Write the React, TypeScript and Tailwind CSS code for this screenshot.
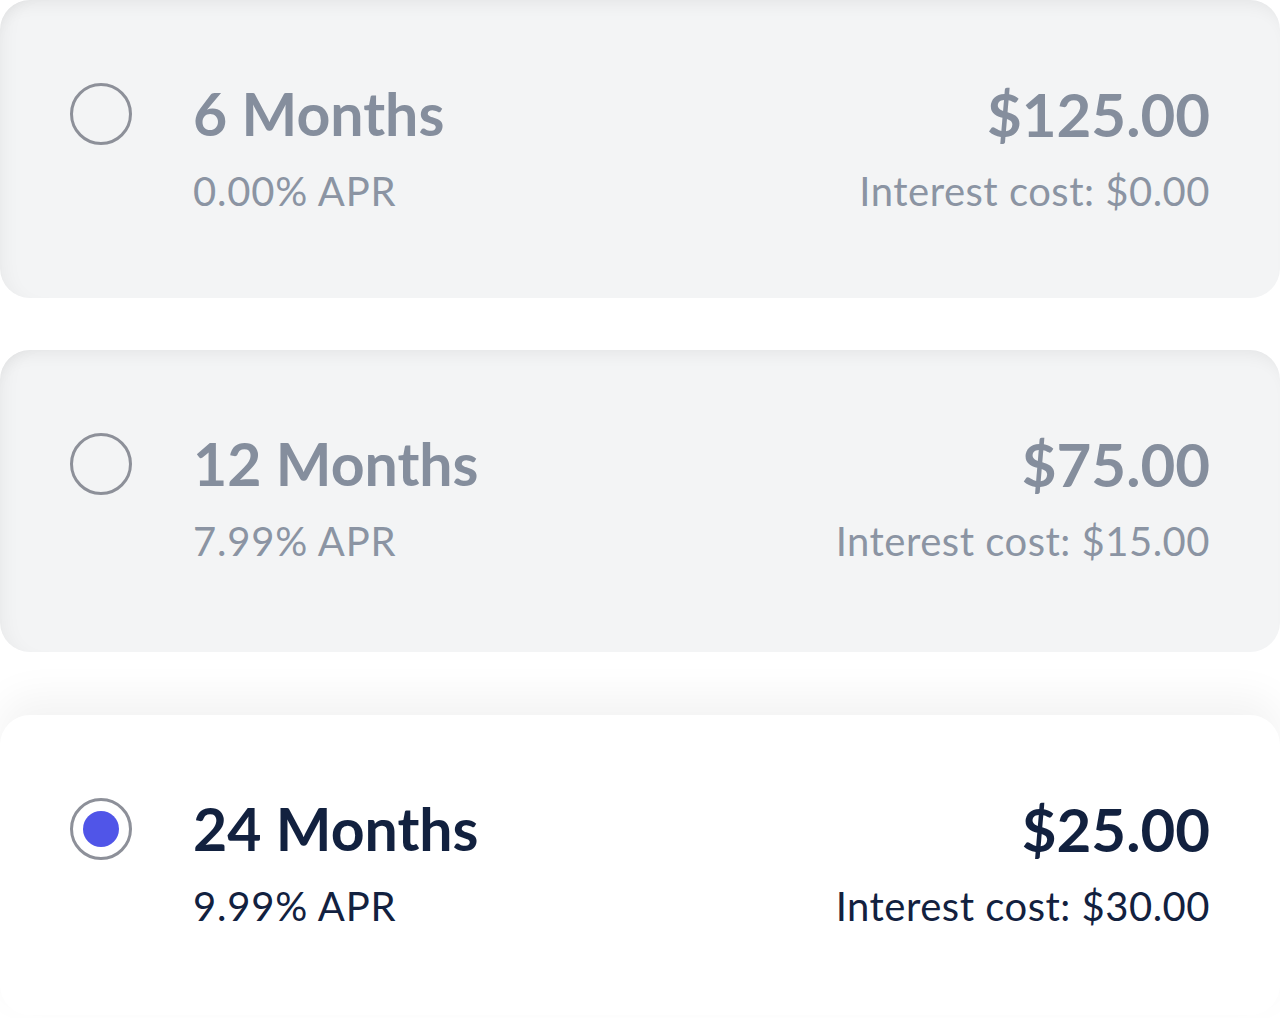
type Plan = {
  months: number;
  apr: string;
  payment: string;
  interest: string;
};

const plans: Plan[] = [
  { months: 6, apr: "0.00%", payment: "$125.00", interest: "$0.00" },
  { months: 12, apr: "7.99%", payment: "$75.00", interest: "$15.00" },
  { months: 24, apr: "9.99%", payment: "$25.00", interest: "$30.00" },
];

const Radio = ({ checked }: { checked: boolean }) => (
  <span className="flex h-[62px] w-[62px] shrink-0 items-center justify-center rounded-full border-[3px] border-[#8d9099] bg-transparent">
    {checked && <span className="h-[36px] w-[36px] rounded-full bg-[#5055e8]" />}
  </span>
);

const PlanCard = ({
  plan,
  selected,
  className,
}: {
  plan: Plan;
  selected: boolean;
  className: string;
}) => {
  const strong = selected ? "text-[#12213f]" : "text-[#858e9d]";
  const soft = selected ? "text-[#12213f]" : "text-[#8b94a3]";
  return (
    <div
      className={`flex w-full items-start justify-between rounded-[30px] px-[70px] pt-[78px] ${
        selected
          ? "bg-white shadow-[0_-18px_40px_rgba(0,0,0,0.05)]"
          : "bg-[#f3f4f5] shadow-[inset_0_14px_18px_-12px_rgba(0,0,0,0.07),inset_16px_0_20px_-14px_rgba(0,0,0,0.05)]"
      } ${className}`}
    >
      <div className="flex items-start gap-[61px]">
        <div className="flex h-[72px] items-center">
          <Radio checked={selected} />
        </div>
        <div className="flex flex-col">
          <span className={`text-[59px] font-bold leading-[72px] ${strong}`}>
            {plan.months} Months
          </span>
          <span className={`mt-[17px] text-[40px] leading-[48px] tracking-[0.8px] ${soft}`}>
            {plan.apr} APR
          </span>
        </div>
      </div>
      <div className="flex flex-col items-end">
        <span className={`text-[60px] font-bold leading-[72px] ${strong}`}>
          {plan.payment}
        </span>
        <span className={`mt-[17px] text-[40px] leading-[48px] tracking-[0.5px] ${soft}`}>
          Interest cost: {plan.interest}
        </span>
      </div>
    </div>
  );
};

export default function App() {
  return (
    <div
      className="flex h-[1018px] w-[1280px] flex-col overflow-hidden bg-white"
      style={{ fontFamily: "Lato, 'Noto Sans', sans-serif" }}
    >
      <PlanCard plan={plans[0]} selected={false} className="h-[298px] shrink-0" />
      <PlanCard plan={plans[1]} selected={false} className="mt-[52px] h-[302px] shrink-0" />
      <PlanCard plan={plans[2]} selected className="mt-[63px] h-[300px] shrink-0" />
    </div>
  );
}
